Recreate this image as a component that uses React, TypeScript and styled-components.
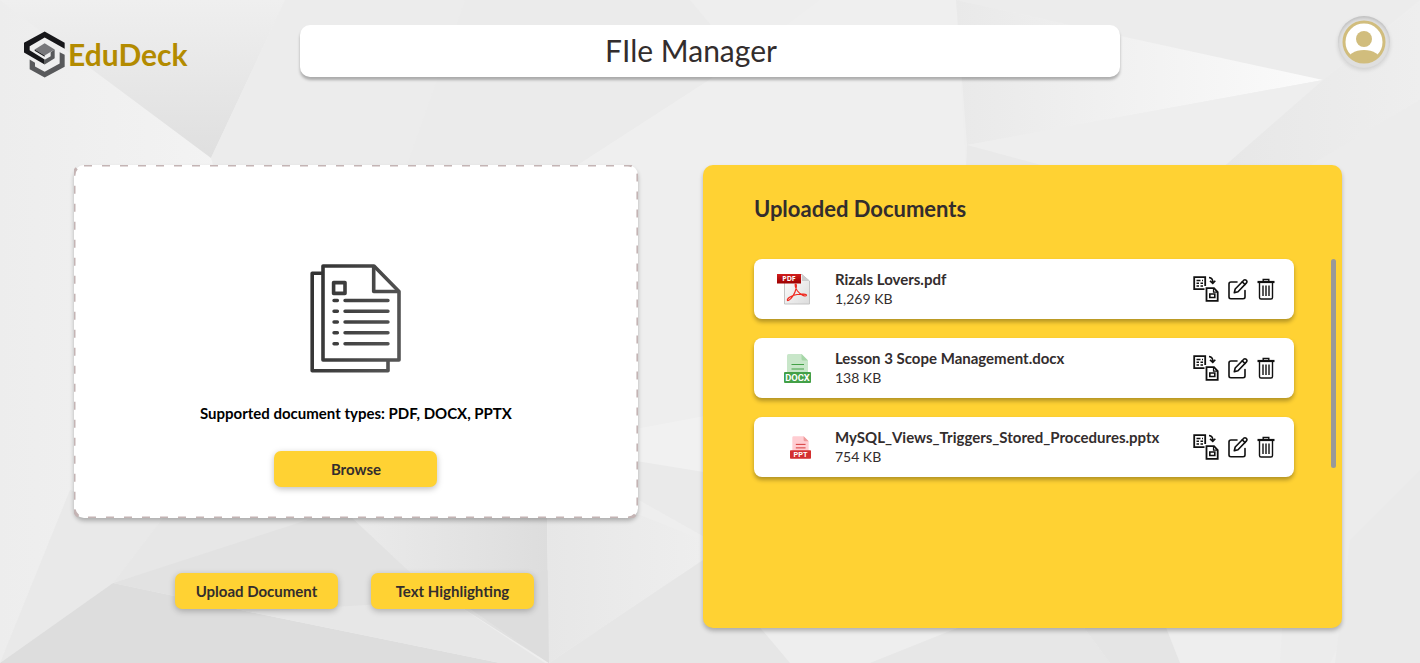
import React from "react";
import styled, { createGlobalStyle } from "styled-components";

const GlobalStyle = createGlobalStyle`
  * { box-sizing: border-box; }
  body {
    margin: 0;
    background: #ececec;
    color: #332d2d;
    font-family: Lato, "Open Sans", sans-serif;
  }
  h1, h2, p, ul { margin: 0; padding: 0; }
  button { font-family: inherit; color: inherit; border: 0; cursor: pointer; }
`;

const Page = styled.div`
  position: relative;
  isolation: isolate;
  min-height: 100vh;
  padding-bottom: 35px;
`;

const BackdropArt = styled.svg`
  position: absolute;
  inset: 0;
  z-index: -1;
  width: 100%;
  height: 100%;
`;

const Header = styled.header`
  display: grid;
  grid-template-columns: 1fr minmax(0, 820px) 1fr;
  align-items: start;
  padding: 16px 24px 0;
`;

const Brand = styled.a`
  display: flex;
  align-items: center;
  gap: 3px;
  margin-top: 14px;
  color: #b38b00;
  font-size: 30px;
  line-height: 48px;
  font-weight: 700;
  text-decoration: none;
`;

const TitleBar = styled.h1`
  margin-top: 9px;
  padding: 0 38px 2px 0;
  border-radius: 10px;
  background: #fff;
  box-shadow: 0 3px 3px rgba(0, 0, 0, 0.28);
  font-size: 30px;
  line-height: 50px;
  font-weight: 400;
  text-align: center;
`;

const AvatarButton = styled.button`
  justify-self: end;
  display: grid;
  place-items: center;
  width: 52px;
  height: 52px;
  margin-right: 6px;
  padding: 0;
  border-radius: 50%;
  background: #dfdfdf;
  box-shadow: 0 2px 4px rgba(0, 0, 0, 0.12), inset 0 2px 3px rgba(0, 0, 0, 0.14);
`;

const Main = styled.main`
  display: grid;
  grid-template-columns: 15fr 17fr;
  gap: 65px;
  padding: 87px 78px 0 74px;
`;

const UploadColumn = styled.section`
  display: flex;
  flex-direction: column;
`;

const DropZone = styled.div`
  position: relative;
  display: flex;
  flex-direction: column;
  align-items: center;
  padding: 99px 24px 31px;
  border-radius: 10px;
  background: #fff;
  box-shadow: 0 3px 4px rgba(0, 0, 0, 0.25);
`;

const DashedOutline = styled.svg`
  position: absolute;
  inset: 0;
  width: 100%;
  height: 100%;
  pointer-events: none;
`;

const Hint = styled.p`
  margin: 29px 0 28px;
  color: #000;
  font-size: 15px;
  line-height: 20px;
  font-weight: 700;
`;

const YellowButton = styled.button`
  width: 163px;
  height: 36px;
  padding: 0;
  border-radius: 7px;
  background: #ffd233;
  box-shadow: 0 2px 6px rgba(0, 0, 0, 0.25);
  font-size: 15px;
  line-height: 20px;
  font-weight: 700;
`;

const ButtonRow = styled.div`
  display: flex;
  justify-content: center;
  gap: 33px;
  padding: 55px 3px 0 0;
`;

const DocumentsPanel = styled.section`
  min-height: 463px;
  padding: 28px 6px 24px 51px;
  border-radius: 10px;
  background: #ffd233;
  box-shadow: 0 3px 4px rgba(0, 0, 0, 0.25);
`;

const PanelTitle = styled.h2`
  font-size: 22px;
  line-height: 32px;
  font-weight: 700;
`;

const ListArea = styled.div`
  display: flex;
  align-items: flex-start;
  gap: 37px;
  margin-top: 34px;
`;

const DocumentList = styled.ul`
  flex: 1;
  min-width: 0;
  display: flex;
  flex-direction: column;
  gap: 19px;
  list-style: none;
`;

const ScrollThumb = styled.div`
  width: 5px;
  height: 209px;
  border-radius: 3px;
  background: #999;
`;

const DocumentRow = styled.li`
  display: flex;
  align-items: center;
  height: 60px;
  padding: 0 19px 0 22px;
  border-radius: 8px;
  background: #fff;
  box-shadow: 0 3px 4px rgba(0, 0, 0, 0.3);
`;

const FileIconSlot = styled.div`
  display: flex;
  justify-content: flex-end;
  width: 35px;
  margin-right: 24px;
`;

const FileText = styled.div`
  flex: 1;
  min-width: 0;
  line-height: 20px;
`;

const FileName = styled.p`
  font-size: 15px;
  font-weight: 700;
`;

const FileSize = styled.p`
  font-size: 14px;
`;

const Actions = styled.div`
  display: flex;
  align-items: center;
  gap: 9px;
`;

const IconButton = styled.button`
  display: flex;
  padding: 0;
  background: none;
  color: #111;
`;

function Backdrop() {
  return (
    <BackdropArt viewBox="0 0 1420 663" preserveAspectRatio="none" aria-hidden="true">
      <defs>
        <linearGradient id="facetDown" x1="0" y1="0" x2="0" y2="1">
          <stop offset="0" stopColor="#efefef" />
          <stop offset="1" stopColor="#dfdfdf" />
        </linearGradient>
        <linearGradient id="facetRight" x1="0" y1="0" x2="1" y2="0">
          <stop offset="0" stopColor="#e9e9e9" />
          <stop offset="1" stopColor="#fbfbfb" />
        </linearGradient>
        <linearGradient id="facetLeft" x1="0" y1="0" x2="1" y2="0">
          <stop offset="0" stopColor="#ebebeb" />
          <stop offset="1" stopColor="#dddddd" />
        </linearGradient>
        <linearGradient id="facetLight" x1="0" y1="0" x2="1" y2="0">
          <stop offset="0" stopColor="#ededed" />
          <stop offset="1" stopColor="#f4f4f4" />
        </linearGradient>
        <linearGradient id="facetSide" x1="0" y1="0" x2="1" y2="0">
          <stop offset="0" stopColor="#e7e7e7" />
          <stop offset="1" stopColor="#eeeeee" />
        </linearGradient>
      </defs>
      <path fill="#eeeeee" d="M0 0H1420V663H0z" />
      <path fill="url(#facetLight)" d="M0 0 15 10 211 158 260 300 70 490 0 663z" />
      <path fill="url(#facetDown)" d="M0 0H285L211 158 15 12z" />
      <path fill="#ececec" d="M285 0H465L405 170 230 220 211 158z" />
      <path fill="#ebebeb" d="M465 0H690L740 60 570 170H405z" />
      <path fill="#efefef" d="M740 60 820 0H956L966 170H570z" />
      <path fill="#ececec" d="M956 0H1420L1323 80z" />
      <path fill="url(#facetRight)" d="M956 0 1120 36 1323 80 967 145z" />
      <path fill="#eeeeee" d="M967 145 1323 80 1220 170H1060z" />
      <path fill="#e9e9e9" d="M967 145 1060 170H966z" />
      <path fill="url(#facetSide)" d="M1420 2V270L1320 450 1220 170 1323 80z" />
      <path fill="#ececec" d="M1420 100V480L1330 663H1280L1310 165z" />
      <path fill="#eaeaea" d="M1420 470V663H1335L1350 540z" />
      <path fill="#e9e9e9" d="M70 490 165 515 113 583 0 663z" />
      <path fill="#e7e7e7" d="M165 515H330L113 583z" />
      <path fill="url(#facetLeft)" d="M345 515H547L549 663 410 575z" />
      <path fill="#e2e2e2" d="M113 583 320 516H350L415 577 450 605 250 612z" />
      <path fill="#dddddd" d="M113 583 250 612 500 663H0z" />
      <path fill="#e7e7e7" d="M250 612 450 600 545 663H500z" />
      <path fill="#dddddd" d="M450 595 549 663V570z" />
      <path fill="url(#facetSide)" d="M547 515H640L703 540V560L549 663z" />
      <path fill="#e6e6e6" d="M549 663 703 560 790 663z" />
      <path fill="#f1f1f1" d="M630 430 710 415V475L630 460z" />
      <path fill="#eaeaea" d="M630 460 710 473V540L630 495z" />
      <path fill="#e7e7e7" d="M870 663 965 625H1082L1110 663z" />
      <path fill="#e5e5e5" d="M1082 625H1165L1180 663H1110z" />
    </BackdropArt>
  );
}

function BrandMark() {
  return (
    <svg width="41" height="47" viewBox="70 92 123 140" aria-hidden="true">
      <path fill="#17171a" d="M132 93 192 127V145L132 111 87 137V149L132 177V192L70 156V127z" />
      <path fill="#58595b" d="M87 177 103 187V198L132 214 177 189V155L192 163V199L132 231 87 206z" />
      <path fill="#77777a" d="M132 128 162 147 132 165 102 147z" />
      <path fill="#17171a" d="M102 147 132 165V169L102 151z" />
      <path fill="#58595b" d="M162 147V173L132 192V178L150 167V155z" />
    </svg>
  );
}

function AvatarIcon() {
  return (
    <svg width="44" height="44" viewBox="0 0 44 44" aria-hidden="true">
      <defs>
        <clipPath id="avatarDisc">
          <circle cx="22" cy="22" r="21" />
        </clipPath>
      </defs>
      <circle cx="22" cy="22" r="20" fill="#fff" />
      <circle cx="22" cy="19" r="8" fill="#d1bd7d" />
      <ellipse cx="22" cy="41" rx="17" ry="11" fill="#d1bd7d" clipPath="url(#avatarDisc)" />
      <circle cx="22" cy="22" r="20" fill="none" stroke="#d1bd7d" strokeWidth="3" />
    </svg>
  );
}

function PapersIcon() {
  return (
    <svg width="92" height="110" viewBox="10 14 92 110" fill="none" aria-hidden="true">
      <defs>
        <linearGradient id="ink" gradientUnits="userSpaceOnUse" x1="10" y1="60" x2="102" y2="80">
          <stop offset="0" stopColor="#333" />
          <stop offset="1" stopColor="#555" />
        </linearGradient>
      </defs>
      <g stroke="url(#ink)" strokeWidth="3.6" strokeLinejoin="round">
        <path d="M22.5 23.3H12.2V120.7H88V110" />
        <path d="M23 16H74L99 41.5V110H23z" />
        <path d="M73.7 16V41.5H99" />
        <path d="M33.6 32.6H45V43.4H33.6z" />
        <path
          strokeLinecap="round"
          strokeWidth="3.4"
          d="M34 50.5H37.4M45 50.5H88M34 61.3H37.4M45 61.3H88M34 72H37.4M45 72H88M34 82.8H37.4M45 82.8H88M34 93.7H37.4M45 93.7H88"
        />
      </g>
    </svg>
  );
}

function PdfIcon() {
  return (
    <svg width="35" height="32" viewBox="0 0 35 32" aria-hidden="true">
      <defs>
        <linearGradient id="pdfPaper" x1="0" y1="0" x2="1" y2="1">
          <stop offset="0" stopColor="#fff" />
          <stop offset="1" stopColor="#dcdcdc" />
        </linearGradient>
        <linearGradient id="pdfBand" x1="0" y1="0" x2="0" y2="1">
          <stop offset="0" stopColor="#d21e1e" />
          <stop offset="1" stopColor="#9c0000" />
        </linearGradient>
      </defs>
      <path fill="url(#pdfPaper)" stroke="#c4c4c4" d="M8.5 1.5H26L33.5 8V31H8.5z" />
      <path fill="#ccc" d="M26 1.5V8H33.5z" />
      <path fill="url(#pdfBand)" d="M1 1H25V10.5H1z" />
      <text x="13" y="8.4" fill="#fff" fontFamily="Open Sans, sans-serif" fontSize="7" fontWeight="700" textAnchor="middle">
        PDF
      </text>
      <path
        fill="none"
        stroke="#f0281e"
        strokeWidth="1.2"
        d="M19.5 11C21 11 20.5 15 19 19C17 24 13 28 11.5 27.5C10.5 26 15 22.5 21 21.5C26 20.7 31 21 30.5 22.5C29.5 24 24 21.5 21.5 18C19.5 15 18.5 11.5 19.5 11z"
      />
    </svg>
  );
}

type SheetProps = { label: string; width: number; height: number; paper: string; fold: string; ink: string };

function SheetIcon({ label, width, height, paper, fold, ink }: SheetProps) {
  return (
    <svg width={width} height={height} viewBox="0 0 27 29" aria-hidden="true">
      <path fill={paper} d="M4.5 0H17.5L24 6.5V20H3V1.5Q3 0 4.5 0z" />
      <path fill={fold} d="M17.5 0 24 6.5H19Q17.5 6.5 17.5 5z" />
      <path stroke={ink} strokeWidth="1.2" d="M7.5 10.5H20M7.5 15H20" />
      <rect y="18" width="27" height="11" rx="1" fill={ink} />
      <text x="13.5" y="26.8" fill="#fff" fontFamily="Roboto, sans-serif" fontSize="9.4" fontWeight="700" textAnchor="middle">
        {label}
      </text>
    </svg>
  );
}

function ConvertIcon() {
  return (
    <svg width="26" height="26" viewBox="0 0 26 26" fill="none" stroke="currentColor" strokeWidth="1.8" aria-hidden="true">
      <path d="M11.5 13.2H1.2V1.2H12.2V10" />
      <path strokeWidth="1.5" d="M3.5 4.5H7.5M3.5 7.2H6M7.5 7.2H10M3.5 10H6M7.5 10H10M9 4.5H10" />
      <path strokeWidth="1.6" d="M16 1.5Q20 2 19.8 6.5M17 4.8 19.8 7.4 22.3 4.8" />
      <path d="M13.5 12.2H21L24.7 16V24.8H13.5z" />
      <path strokeWidth="1.6" d="M16.8 18H21.8V21.5H16.8z" />
      <path strokeWidth="1.2" d="M20.5 12.5V16.2H24.5" />
    </svg>
  );
}

function EditIcon() {
  return (
    <svg width="20" height="22" viewBox="0 0 20 22" fill="none" stroke="currentColor" strokeWidth="1.6" strokeLinecap="round" strokeLinejoin="round" aria-hidden="true">
      <path d="M9 4H3Q1 4 1 6V19Q1 20.7 3 20.7H15Q17 20.7 17 19V12.5" />
      <path d="M6.3 14.8 7.2 11 15.8 2.2Q17 1.2 18.3 2.3Q19.5 3.5 18.5 4.9L10 13.7z" />
      <path d="M14.3 3.9 17 6.5" />
    </svg>
  );
}

function TrashIcon() {
  return (
    <svg width="18" height="22" viewBox="0 0 18 22" fill="none" stroke="currentColor" strokeWidth="1.4" aria-hidden="true">
      <path strokeWidth="2.2" d="M0.5 4H17.5" />
      <path d="M6.2 3.5V1.5H11.8V3.5" />
      <path d="M2.5 5V19.5Q2.5 21 4 21H14Q15.5 21 15.5 19.5V5" />
      <path d="M6 7.5V18M9 7.5V18M12 7.5V18" />
    </svg>
  );
}

const documents = [
  { name: "Rizals Lovers.pdf", size: "1,269 KB", icon: <PdfIcon /> },
  {
    name: "Lesson 3 Scope Management.docx",
    size: "138 KB",
    icon: <SheetIcon label="DOCX" width={27} height={29} paper="#c8e6c9" fold="#a5d6a7" ink="#43a047" />,
  },
  {
    name: "MySQL_Views_Triggers_Stored_Procedures.pptx",
    size: "754 KB",
    icon: <SheetIcon label="PPT" width={21} height={23} paper="#ffcdd2" fold="#ef9a9a" ink="#d32f2f" />,
  },
];

export default function App() {
  return (
    <Page>
      <GlobalStyle />
      <Backdrop />
      <Header>
        <Brand href="#">
          <BrandMark />
          EduDeck
        </Brand>
        <TitleBar>FIle Manager</TitleBar>
        <AvatarButton type="button" aria-label="Account">
          <AvatarIcon />
        </AvatarButton>
      </Header>
      <Main>
        <UploadColumn>
          <DropZone>
            <DashedOutline aria-hidden="true">
              <rect width="100%" height="100%" rx="10" fill="none" stroke="#c4b4b4" strokeWidth="3" strokeDasharray="8 10" />
            </DashedOutline>
            <PapersIcon />
            <Hint>Supported document types: PDF, DOCX, PPTX</Hint>
            <YellowButton type="button">Browse</YellowButton>
          </DropZone>
          <ButtonRow>
            <YellowButton type="button">Upload Document</YellowButton>
            <YellowButton type="button">Text Highlighting</YellowButton>
          </ButtonRow>
        </UploadColumn>
        <DocumentsPanel>
          <PanelTitle>Uploaded Documents</PanelTitle>
          <ListArea>
            <DocumentList>
              {documents.map((doc) => (
                <DocumentRow key={doc.name}>
                  <FileIconSlot>{doc.icon}</FileIconSlot>
                  <FileText>
                    <FileName>{doc.name}</FileName>
                    <FileSize>{doc.size}</FileSize>
                  </FileText>
                  <Actions>
                    <IconButton type="button" aria-label={`Convert ${doc.name}`}>
                      <ConvertIcon />
                    </IconButton>
                    <IconButton type="button" aria-label={`Edit ${doc.name}`}>
                      <EditIcon />
                    </IconButton>
                    <IconButton type="button" aria-label={`Delete ${doc.name}`}>
                      <TrashIcon />
                    </IconButton>
                  </Actions>
                </DocumentRow>
              ))}
            </DocumentList>
            <ScrollThumb />
          </ListArea>
        </DocumentsPanel>
      </Main>
    </Page>
  );
}
